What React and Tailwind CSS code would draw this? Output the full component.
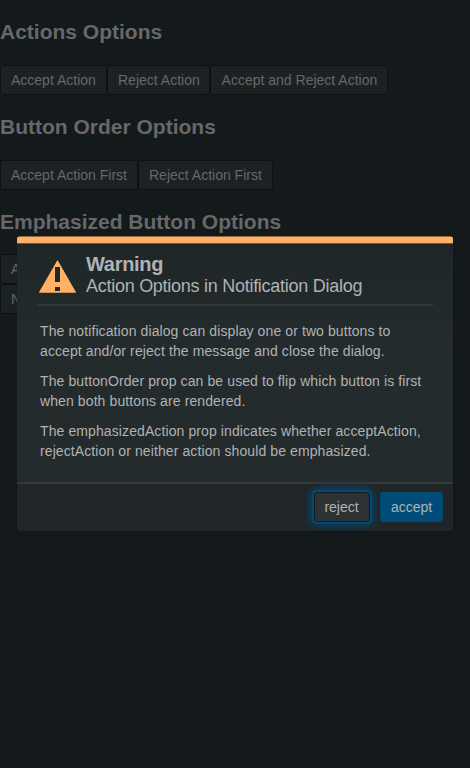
import React from 'react';

function PageButton({ children, className = 'pl-[10px]' }) {
  return (
    <button className={`h-[30px] shrink-0 rounded-[3px] border border-[#0e1112] bg-[#1c2123] text-left text-[14px] leading-[28px] whitespace-nowrap text-[#666869] ${className}`}>
      {children}
    </button>
  );
}

function Heading({ children }) {
  return <h2 className="h-[24px] text-[21px] leading-[24px] font-bold whitespace-nowrap text-[#666869]">{children}</h2>;
}

function WarningIcon() {
  return (
    <svg className="mt-[16px] h-[33px] w-[37px] shrink-0" viewBox="0 0 37 33">
      <path fill="#ffb166" fillRule="evenodd" d="M18.5 0 37.3 32.7H-.3ZM16 7v15h5V7Zm0 20v4h5V27Z" />
    </svg>
  );
}

function Dialog() {
  return (
    <div className="absolute top-[236px] left-[17px] flex h-[295px] w-[436px] flex-col overflow-hidden rounded-[3px] text-[#b0b2b3] shadow-[0_1px_6px_rgba(0,0,0,0.1)]">
      <div className="h-px shrink-0 bg-[#8f6840]" />
      <div className="h-[6px] shrink-0 bg-[#ffb166]" />
      <div className="h-px shrink-0 bg-[#6c5740]" />
      <div className="flex min-h-0 flex-1 flex-col bg-linear-to-b from-[#1f2628] to-[#242b2d] to-40%">
        <header className="mx-5 flex h-[62px] shrink-0 border-b-2 border-[#32383a] pl-[2px]">
          <WarningIcon />
          <div className="ml-[10px] pt-[9px]">
            <h1 className="text-[20px] leading-[22px] font-bold tracking-[-0.3px]">Warning</h1>
            <h2 className="text-[18px] leading-[22px] tracking-[-0.27px] whitespace-nowrap">Action Options in Notification Dialog</h2>
          </div>
        </header>
        <main className="flex flex-col gap-[10px] pt-[15px] pl-[23px] text-[14px] leading-[20px] tracking-[0.1px] whitespace-nowrap">
          <p>The notification dialog can display one or two buttons to<br />accept and/or reject the message and close the dialog.</p>
          <p>The buttonOrder prop can be used to flip which button is first<br />when both buttons are rendered.</p>
          <p>The emphasizedAction prop indicates whether acceptAction,<br />rejectAction or neither action should be emphasized.</p>
        </main>
      </div>
      <footer className="flex h-[49px] shrink-0 justify-end gap-[10px] border-t-2 border-[#34393c] bg-[#202528] pt-[8px] pr-[10px]">
        <button className="h-[30px] w-[56px] rounded-[3px] border border-[#171b1d] bg-[#2d3235] pr-px text-[14px] leading-[28px] shadow-[0_0_1px_2px_#004c78,0_0_8px_3px_#004c78]">reject</button>
        <button className="h-[30px] w-[63px] rounded-[3px] border border-[#03496f] bg-[#004c78] text-[14px] leading-[28px]">accept</button>
      </footer>
    </div>
  );
}

export default function App() {
  return (
    <div className="relative h-[768px] w-[470px] overflow-hidden bg-[#14191b] font-['Liberation_Sans',Arial,sans-serif]">
      <div className="pt-[20px]">
        <Heading>Actions Options</Heading>
        <div className="mt-[21px] mb-[20px] flex">
          <PageButton className="w-[107px] pl-[10px]">Accept Action</PageButton>
          <PageButton className="w-[103px] pl-[10px]">Reject Action</PageButton>
          <PageButton className="w-[178px] pl-[10.6px]">Accept and Reject Action</PageButton>
        </div>
        <Heading>Button Order Options</Heading>
        <div className="mt-[21px] mb-[20px] flex">
          <PageButton className="w-[138px] pl-[10px]">Accept Action First</PageButton>
          <PageButton className="w-[135px] pl-[10px]">Reject Action First</PageButton>
        </div>
        <Heading>Emphasized Button Options</Heading>
        <div className="mt-[20px] flex flex-col items-start">
          <PageButton className="w-[190px] pl-[10px]">Accept Action Emphasized</PageButton>
          <PageButton className="w-[190px] pl-[10px]">Neither Action Emphasized</PageButton>
        </div>
      </div>
      <Dialog />
    </div>
  );
}
